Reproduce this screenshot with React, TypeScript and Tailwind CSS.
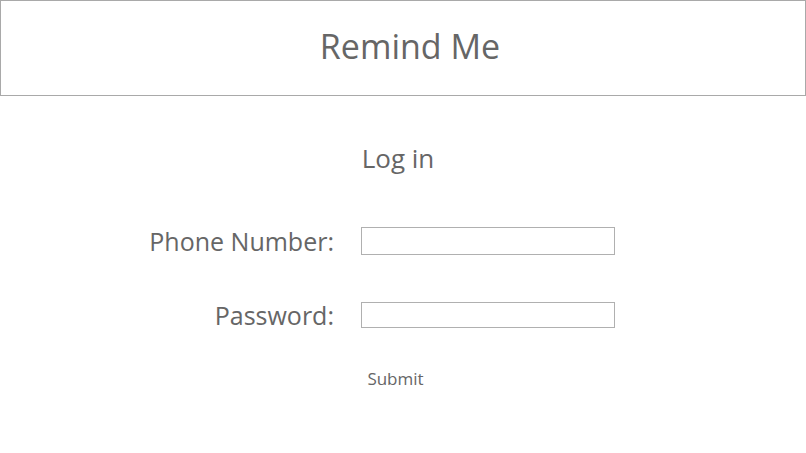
export default function App() {
  const font = { fontFamily: '"Open Sans", "Noto Sans", sans-serif' };
  return (
    <div className="w-[806px] h-[453px] bg-white text-[#666666]" style={font}>
      <div className="h-[96px] border border-[#a9a9a9] flex items-center justify-center">
        <span className="text-[34px] leading-none pb-[4px] pl-[14px]">Remind Me</span>
      </div>
      <div className="flex flex-col">
        <div className="h-[60px] mt-[32px] flex items-center justify-center pr-[10px]">
          <span className="text-[26px] leading-none">Log in</span>
        </div>
        <div className="flex items-center mt-[39px] h-[28px]">
          <div className="w-[334px] text-right text-[25px] leading-none">Phone Number:</div>
          <div className="ml-[27px] w-[254px] h-[28px] border border-[#b0b0b0]" />
        </div>
        <div className="flex items-center mt-[47px] h-[26px]">
          <div className="w-[334px] text-right text-[25px] leading-none">Password:</div>
          <div className="ml-[27px] w-[254px] h-[26px] border border-[#b0b0b0]" />
        </div>
        <div className="flex justify-center mt-[42px] pr-[15px]">
          <span className="text-[17px] leading-none">Submit</span>
        </div>
      </div>
    </div>
  );
}
